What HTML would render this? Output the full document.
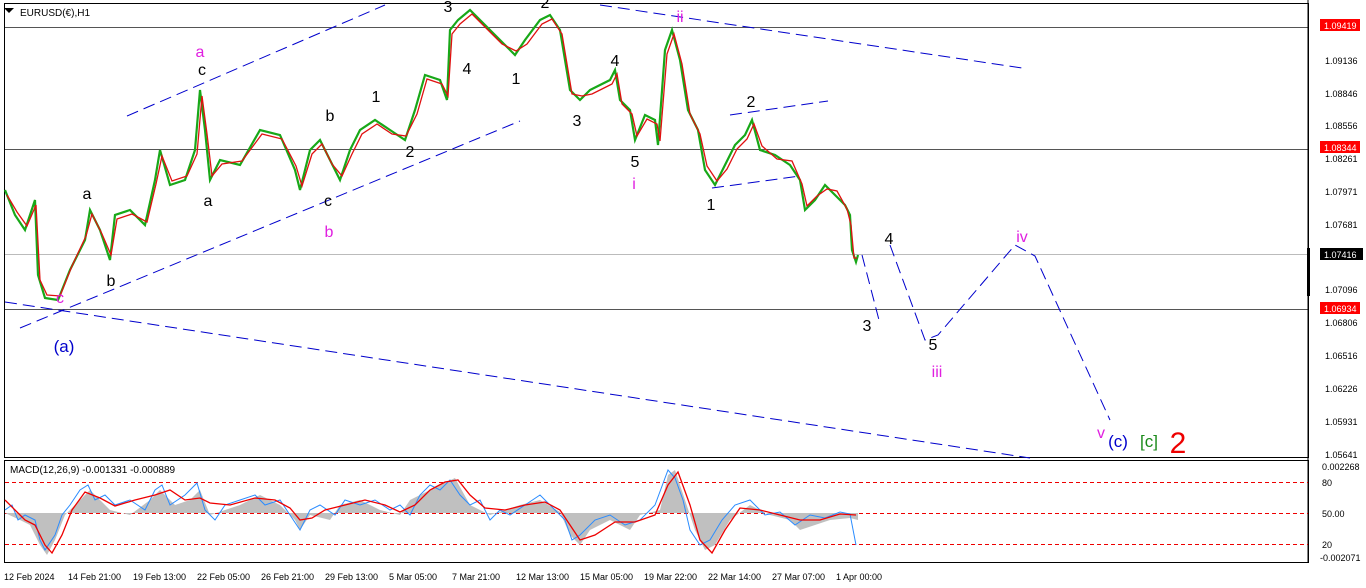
<!DOCTYPE html><html><head><style>body{margin:0;background:#fff;width:1366px;height:588px;overflow:hidden}svg{display:block}</style></head><body>
<svg width="1366" height="588" xmlns="http://www.w3.org/2000/svg" font-family="Liberation Sans, sans-serif">
<rect width="1366" height="588" fill="#fff"/>
<rect x="4.5" y="3.5" width="1304" height="454" fill="none" stroke="#000"/>
<rect x="4.5" y="460.5" width="1304" height="102" fill="none" stroke="#000"/>
<path d="M4 8l5 5 5-5z" fill="#000"/><text x="20" y="16" font-size="10">EURUSD(€),H1</text>
<g stroke="#555" stroke-width="1"><line x1="5" y1="27.5" x2="1308" y2="27.5"/><line x1="5" y1="149.5" x2="1308" y2="149.5"/><line x1="5" y1="309.5" x2="1308" y2="309.5"/></g>
<line x1="5" y1="254.5" x2="1308" y2="254.5" stroke="#bbb"/>
<g stroke="#00c" stroke-dasharray="12,6" fill="none"><line x1="127" y1="116" x2="385" y2="5"/><line x1="20" y1="328" x2="520" y2="121"/><line x1="5" y1="302" x2="1030" y2="458"/><line x1="600" y1="5" x2="1022" y2="68"/><line x1="730" y1="115" x2="828" y2="101"/><line x1="712" y1="188" x2="800" y2="176"/>
<polyline points="862,255 879,320"/><polyline points="890,245 925,340 938,335 1015,245 1035,256 1110,420"/></g>
<polyline fill="none" stroke="#18a818" stroke-width="2.2" points="5,190 15,215 25,230 35,200 38,275 45,298 58,300 70,270 85,240 90,210 100,230 110,260 115,215 130,210 145,225 155,180 160,150 170,185 185,180 195,150 200,90 205,130 210,180 220,160 240,165 260,130 280,135 295,170 300,190 310,150 320,140 330,160 340,180 350,150 360,130 375,120 390,130 405,140 415,110 425,75 440,80 447,100 450,30 458,20 470,10 490,30 500,40 515,55 525,40 540,20 550,15 560,30 570,90 580,100 590,90 600,85 610,80 615,70 620,100 630,110 635,140 645,115 655,120 658,145 665,50 672,30 680,60 688,110 698,130 705,170 715,185 725,165 735,145 745,135 752,120 760,150 775,155 790,165 800,180 805,210 815,200 825,185 835,195 845,205 850,215 852,250 856,262 858,255"/>
<polyline fill="none" stroke="#e01010" stroke-width="1.3" points="7,195 17,212 27,226 36,205 40,280 47,295 60,296 72,266 86,236 92,214 102,234 111,255 117,219 132,214 147,222 156,184 162,156 172,181 187,176 197,154 202,96 207,134 212,176 222,164 242,161 262,134 282,139 296,166 302,186 312,154 322,144 332,164 342,176 352,154 362,134 377,124 392,134 406,136 417,114 427,79 442,84 448,96 452,34 460,24 472,14 492,34 502,44 516,51 527,44 542,24 552,19 562,34 572,94 582,96 592,94 602,89 612,84 617,74 622,104 632,114 637,136 647,119 657,124 660,141 667,54 674,34 682,64 690,114 700,134 707,166 717,181 727,169 737,149 747,139 754,124 762,146 777,159 792,161 802,184 807,206 817,196 827,189 837,191 847,209 851,225 854,258 857,258"/>
<g font-size="16" fill="#000" text-anchor="middle">
<text x="87" y="199">a</text><text x="111" y="286">b</text><text x="202" y="75">c</text><text x="208" y="206">a</text><text x="330" y="121">b</text><text x="328" y="206">c</text><text x="376" y="102">1</text><text x="410" y="157">2</text><text x="448" y="12">3</text><text x="467" y="74">4</text><text x="516" y="84">1</text><text x="545" y="8">2</text><text x="577" y="126">3</text><text x="615" y="66">4</text><text x="635" y="167">5</text><text x="751" y="107">2</text><text x="711" y="210">1</text><text x="867" y="331">3</text><text x="889" y="244">4</text><text x="933" y="350">5</text></g>
<g font-size="16" fill="#e020e0" text-anchor="middle"><text x="200" y="57">a</text><text x="329" y="237">b</text><text x="60" y="303">c</text><text x="634" y="189">i</text><text x="680" y="22">ii</text><text x="937" y="377">iii</text><text x="1022" y="242">iv</text><text x="1101" y="438">v</text></g>
<text x="64" y="352" font-size="17" fill="#00c" text-anchor="middle">(a)</text>
<text x="1118" y="447" font-size="17" fill="#00c" text-anchor="middle">(c)</text>
<text x="1149" y="447" font-size="17" fill="#1a8a1a" text-anchor="middle">[c]</text>
<text x="1178" y="453" font-size="30" fill="#e00" text-anchor="middle">2</text>
<g font-size="9" fill="#000"><line x1="1308" y1="0" x2="1308" y2="563" stroke="#000"/>
<text x="1325" y="64">1.09136</text><text x="1325" y="97">1.08846</text><text x="1325" y="129">1.08556</text><text x="1325" y="162">1.08261</text><text x="1325" y="195">1.07971</text><text x="1325" y="228">1.07681</text><text x="1325" y="293">1.07096</text><text x="1325" y="326">1.06806</text><text x="1325" y="359">1.06516</text><text x="1325" y="392">1.06226</text><text x="1325" y="425">1.05931</text><text x="1325" y="458">1.05641</text>
<rect x="1320" y="19" width="40" height="12" fill="#f00"/><text x="1324" y="29" fill="#fff">1.09419</text>
<rect x="1320" y="141" width="40" height="12" fill="#f00"/><text x="1324" y="151" fill="#fff">1.08344</text>
<rect x="1320" y="302" width="40" height="12" fill="#f00"/><text x="1324" y="312" fill="#fff">1.06934</text>
<rect x="1320" y="248" width="43" height="12" fill="#000"/><text x="1324" y="258" fill="#fff">1.07416</text>
<rect x="1307" y="248" width="3" height="48" fill="#000"/>
<text x="1322" y="470">0.002268</text><text x="1322" y="486">80</text><text x="1322" y="517">50.00</text><text x="1322" y="548">20</text><text x="1320" y="561">-0.002071</text></g>
<text x="10" y="473" font-size="10">MACD(12,26,9) -0.001331 -0.000889</text>
<g stroke="#e00" stroke-dasharray="4,3"><line x1="5" y1="482.5" x2="1308" y2="482.5"/><line x1="5" y1="513.5" x2="1308" y2="513.5"/><line x1="5" y1="544.5" x2="1308" y2="544.5"/></g>
<polygon fill="#c0c0c0" points="5,513 20,520 30,525 40,545 47,555 55,540 65,515 80,500 90,490 100,500 110,510 130,515 150,500 160,490 175,505 190,500 200,490 210,515 240,505 260,495 280,505 295,520 300,530 310,515 330,520 340,505 360,500 380,510 400,515 410,500 430,490 440,485 455,478 470,505 490,515 520,505 540,500 560,512 570,535 580,545 590,530 610,520 630,530 640,515 660,510 668,475 675,470 685,500 695,530 705,550 715,545 730,520 750,505 770,515 790,520 800,530 830,520 850,518 858,520 858,513 5,513"/>
<polyline fill="none" stroke="#2a8cff" stroke-width="1" points="5,510 12,505 18,520 25,515 35,520 40,540 45,550 55,535 62,515 70,505 80,490 88,485 95,500 105,495 115,505 130,500 145,510 155,490 162,485 170,505 185,495 197,483 205,510 215,520 225,505 240,500 255,495 265,505 280,500 290,515 300,530 310,510 320,505 335,515 345,500 360,505 375,500 390,510 400,505 410,515 420,495 430,485 440,490 450,480 460,495 470,505 480,500 490,520 500,510 510,515 525,505 540,495 555,510 565,520 572,540 580,535 595,520 610,515 625,525 640,520 655,505 668,470 675,478 683,500 690,530 700,545 710,540 722,520 735,505 750,500 765,515 780,512 795,525 810,515 825,518 840,512 850,514 856,545"/>
<polyline fill="none" stroke="#e00" stroke-width="1.3" points="5,500 15,510 25,520 35,525 45,545 52,553 62,535 72,510 85,492 100,498 115,506 135,500 155,495 170,490 185,500 200,498 210,503 230,505 255,498 275,500 290,508 300,520 312,518 325,510 345,505 365,500 385,505 400,512 415,505 430,490 445,482 458,480 470,495 485,508 505,510 525,505 545,502 560,510 570,525 580,540 595,535 615,522 635,522 655,515 668,485 678,472 690,505 700,540 712,553 725,530 740,508 760,510 780,515 800,520 820,520 840,514 856,515"/>
<g font-size="9" fill="#000">
<text x="4" y="580">12 Feb 2024</text><text x="68" y="580">14 Feb 21:00</text><text x="133" y="580">19 Feb 13:00</text><text x="197" y="580">22 Feb 05:00</text><text x="261" y="580">26 Feb 21:00</text><text x="325" y="580">29 Feb 13:00</text><text x="389" y="580">5 Mar 05:00</text><text x="452" y="580">7 Mar 21:00</text><text x="516" y="580">12 Mar 13:00</text><text x="580" y="580">15 Mar 05:00</text><text x="644" y="580">19 Mar 22:00</text><text x="708" y="580">22 Mar 14:00</text><text x="772" y="580">27 Mar 07:00</text><text x="836" y="580">1 Apr 00:00</text></g>
</svg></body></html>
